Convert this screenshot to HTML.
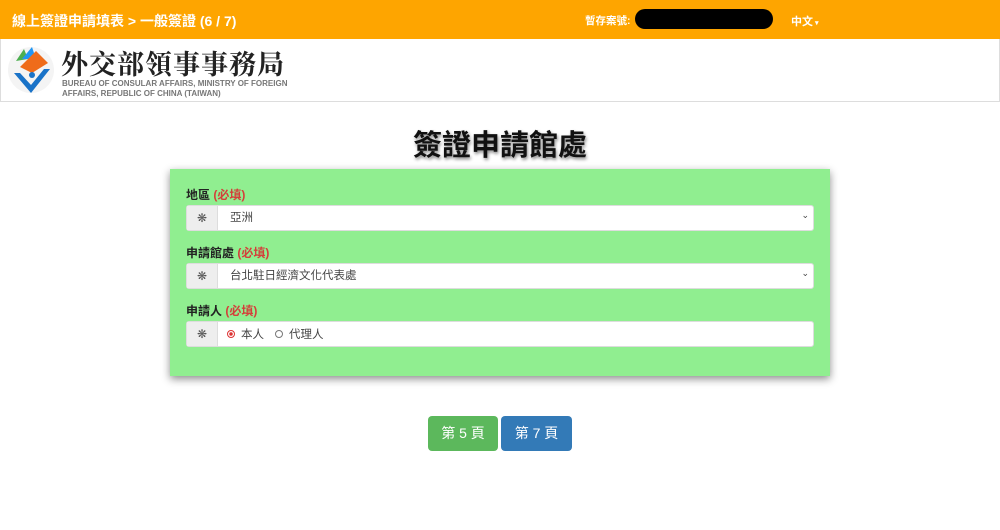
<!DOCTYPE html>
<html><head><meta charset="utf-8"><style>
body{margin:0;width:1000px;height:530px;background:#fff;font-family:"Liberation Sans","Noto Sans CJK TC",sans-serif;position:relative;overflow:hidden}
.top{position:absolute;left:0;top:0;width:1000px;height:39px;background:#fea500;color:#fff;font-weight:bold}
.hdr{position:absolute;left:0;top:39px;width:998px;height:62px;border:1px solid #ddd;border-top:none;background:#fff}
h1{position:absolute;left:0;width:1000px;top:122px;margin:0;text-align:center;font-size:29px;font-weight:bold;color:#111;text-shadow:1px 2px 3px #888}
.box{position:absolute;left:170px;top:169px;width:660px;height:207px;background:#90ee90;box-shadow:0 3px 8px rgba(0,0,0,.45)}
.lbl{position:absolute;left:16px;font-size:12px;font-weight:bold;color:#222}
.lbl span{color:#d43f3a}
.in{position:absolute;left:16px;width:628px;height:26px;background:#fff;border-radius:3px;border:1px solid #ddd;box-sizing:border-box;font-size:11.5px;color:#444}
.in .ad{position:absolute;left:0;top:0;width:30px;height:24px;background:#eee;border-right:1px solid #ddd;text-align:center;line-height:24px;font-size:12px;color:#555}
.in .t{position:absolute;left:43px;top:3px}
.in .car{position:absolute;right:4px;top:4px;font-size:9px}
.btn{position:absolute;top:416px;height:35px;border-radius:4px;color:#fff;font-size:14px;text-align:center;line-height:35px}
</style></head><body>
<div class="top">
<div style="position:absolute;left:12px;top:11px;font-size:14px">線上簽證申請填表 &gt; 一般簽證 (6 / 7)</div>
<div style="position:absolute;left:585px;top:13px;font-size:10.5px">暫存案號:</div>
<div style="position:absolute;left:635px;top:9px;width:138px;height:20px;background:#000;border-radius:10px"></div>
<div style="position:absolute;left:791px;top:13px;font-size:11px">中文<span style="font-size:7px"> ▾</span></div>
</div>
<div class="hdr">
<svg style="position:absolute;left:5px;top:4px" width="50" height="54" viewBox="0 0 50 54">
<circle cx="25" cy="27" r="23" fill="#f4f4f4"/>
<path d="M10 18 L18 6 L22 16 Z" fill="#4caf50"/><path d="M16 16 L26 4 L30 16Z" fill="#2196f3"/>
<path d="M14 24 L30 8 L42 20 L26 30Z" fill="#ef6c1a"/>
<path d="M8 30 L25 50 L44 26 L38 26 L25 42 L14 30Z" fill="#1a73c8"/>
<circle cx="26" cy="32" r="3" fill="#1a73c8"/>
</svg>
<div style="position:absolute;left:60px;top:4px;font-family:'Noto Serif CJK SC',serif;font-size:27px;font-weight:bold;color:#222;letter-spacing:1px">外交部領事事務局</div>
<div style="position:absolute;left:61px;top:40px;font-size:8px;color:#777;font-weight:bold;line-height:10px">BUREAU OF CONSULAR AFFAIRS, MINISTRY OF FOREIGN<br>AFFAIRS, REPUBLIC OF CHINA (TAIWAN)</div>
</div>
<h1>簽證申請館處</h1>
<div class="box">
<div class="lbl" style="top:17px">地區 <span>(必填)</span></div>
<div class="in" style="top:36px"><div class="ad">❋</div><div class="t">亞洲</div><div class="car">⌄</div></div>
<div class="lbl" style="top:75px">申請館處 <span>(必填)</span></div>
<div class="in" style="top:94px"><div class="ad">❋</div><div class="t">台北駐日經濟文化代表處</div><div class="car">⌄</div></div>
<div class="lbl" style="top:133px">申請人 <span>(必填)</span></div>
<div class="in" style="top:152px"><div class="ad">❋</div>
<div style="position:absolute;left:40px;top:8px;width:8px;height:8px;border-radius:50%;border:1px solid #d33;box-sizing:border-box;background:radial-gradient(#d33 40%,#fff 45%)"></div>
<div style="position:absolute;left:54px;top:4px">本人</div>
<div style="position:absolute;left:88px;top:8px;width:8px;height:8px;border-radius:50%;border:1px solid #777;box-sizing:border-box"></div>
<div style="position:absolute;left:102px;top:4px">代理人</div></div>
</div>
<div class="btn" style="left:428px;width:70px;background:#5cb85c">第 5 頁</div>
<div class="btn" style="left:501px;width:71px;background:#337ab7">第 7 頁</div>
</body></html>
